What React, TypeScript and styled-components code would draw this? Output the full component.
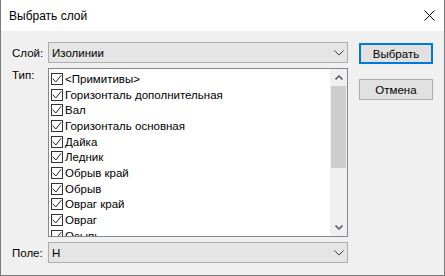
import React from 'react';
import styled, { createGlobalStyle } from 'styled-components';

const GlobalStyle = createGlobalStyle`
  html, body {
    margin: 0;
    padding: 0;
    background: #f0f0f0;
  }
  body {
    font-family: 'Liberation Sans', Arial, sans-serif;
    font-size: 11.5px;
    color: #000;
  }
`;

const items = [
  '<Примитивы>',
  'Горизонталь дополнительная',
  'Вал',
  'Горизонталь основная',
  'Дайка',
  'Ледник',
  'Обрыв край',
  'Обрыв',
  'Овраг край',
  'Овраг',
  'Осыпь',
];

const App = () => {
  return (
    <>
      <GlobalStyle />
      <Window>
        <TitleBar>
          <Title>Выбрать слой</Title>
          <CloseIcon width="11" height="11" viewBox="0 0 11 11">
            <path d="M0.5 0.5 L10.5 10.5 M10.5 0.5 L0.5 10.5" stroke="#000" strokeWidth="1" />
          </CloseIcon>
        </TitleBar>
        <Body>
          <Form>
            <Row>
              <Label>Слой:</Label>
              <Combo>
                <ComboText>Изолинии</ComboText>
                <Chevron />
              </Combo>
            </Row>
            <Row $top>
              <Label $top>Тип:</Label>
              <ListBox>
                <Items>
                  {items.map((name) => (
                    <Item key={name}>
                      <CheckBox>
                        <svg width="10" height="10" viewBox="0 0 10 10">
                          <path d="M0.8 4.8 L3.8 8 L9.2 1.2" fill="none" stroke="#222" strokeWidth="1" />
                        </svg>
                      </CheckBox>
                      <ItemText>{name}</ItemText>
                    </Item>
                  ))}
                </Items>
                <ScrollBar>
                  <ArrowBtn>
                    <svg width="8" height="5" viewBox="0 0 8 5">
                      <path d="M0.5 4.5 L4 1 L7.5 4.5" fill="none" stroke="#606060" strokeWidth="1.6" />
                    </svg>
                  </ArrowBtn>
                  <Track>
                    <Thumb />
                  </Track>
                  <ArrowBtn>
                    <svg width="8" height="5" viewBox="0 0 8 5">
                      <path d="M0.5 0.5 L4 4 L7.5 0.5" fill="none" stroke="#606060" strokeWidth="1.6" />
                    </svg>
                  </ArrowBtn>
                </ScrollBar>
              </ListBox>
            </Row>
            <Row>
              <Label>Поле:</Label>
              <Combo>
                <ComboText>H</ComboText>
                <Chevron />
              </Combo>
            </Row>
          </Form>
          <Buttons>
            <Button $primary>Выбрать</Button>
            <Button>Отмена</Button>
          </Buttons>
        </Body>
      </Window>
    </>
  );
};

const Chevron = () => (
  <ChevronSvg width="10" height="6" viewBox="0 0 10 6">
    <path d="M0.5 0.5 L5 5 L9.5 0.5" fill="none" stroke="#404040" strokeWidth="1" />
  </ChevronSvg>
);

const Window = styled.div`
  width: 445px;
  height: 276px;
  box-sizing: border-box;
  border: 1px solid #7a7a7a;
  border-top: none;
  display: flex;
  flex-direction: column;
  background: #f0f0f0;
`;
const TitleBar = styled.div`
  height: 31px;
  flex: none;
  background: #fff;
  display: flex;
  align-items: center;
  justify-content: space-between;
  padding: 0 9px 0 8px;
`;
const Title = styled.div`
  font-size: 12px;
  color: #000;
  margin-top: 1px;
`;
const CloseIcon = styled.svg`
  display: block;
`;
const Body = styled.div`
  display: flex;
  padding-top: 11px;
`;
const Form = styled.div`
  width: 347px;
  display: flex;
  flex-direction: column;
  gap: 5px;
`;
const Row = styled.div<{ $top?: boolean }>`
  display: flex;
  align-items: ${(p) => (p.$top ? 'flex-start' : 'center')};
`;
const Label = styled.div<{ $top?: boolean }>`
  width: 47px;
  box-sizing: border-box;
  padding-left: 11px;
  padding-top: ${(p) => (p.$top ? '1px' : '0')};
  color: #000;
`;
const Combo = styled.div`
  width: 300px;
  height: 21px;
  box-sizing: border-box;
  border: 1px solid #adadad;
  background: #e5e5e5;
  display: flex;
  align-items: center;
  justify-content: space-between;
  padding: 0 3px 0 3px;
`;
const ComboText = styled.span`
  color: #000;
`;
const ChevronSvg = styled.svg`
  display: block;
`;
const ListBox = styled.div`
  width: 300px;
  height: 169px;
  box-sizing: border-box;
  border: 1px solid #828790;
  background: #fff;
  display: flex;
  overflow: hidden;
`;
const Items = styled.div`
  flex: 1;
  padding: 2px 0 0 2px;
  overflow: hidden;
`;
const Item = styled.div`
  height: 15.7px;
  display: flex;
  align-items: center;
  white-space: nowrap;
`;
const CheckBox = styled.span`
  width: 12px;
  height: 12px;
  box-sizing: border-box;
  border: 1px solid #333;
  background: #fff;
  display: flex;
  align-items: center;
  justify-content: center;
  flex: none;
`;
const ItemText = styled.span`
  margin-left: 2px;
  color: #000;
`;
const ScrollBar = styled.div`
  width: 17px;
  flex: none;
  background: #f0f0f0;
  display: flex;
  flex-direction: column;
`;
const ArrowBtn = styled.div`
  height: 17px;
  flex: none;
  display: flex;
  align-items: center;
  justify-content: center;
`;
const Track = styled.div`
  flex: 1;
`;
const Thumb = styled.div`
  margin: 0 1px;
  height: 82px;
  background: #cdcdcd;
`;
const Buttons = styled.div`
  margin-left: 11px;
  padding-top: 1px;
  display: flex;
  flex-direction: column;
  gap: 15px;
`;
const Button = styled.div<{ $primary?: boolean }>`
  width: 74px;
  height: 21px;
  box-sizing: border-box;
  border: ${(p) => (p.$primary ? '2px solid #0078d7' : '1px solid #adadad')};
  background: #e1e1e1;
  display: flex;
  align-items: center;
  justify-content: center;
  color: #000;
`;

export default App;
